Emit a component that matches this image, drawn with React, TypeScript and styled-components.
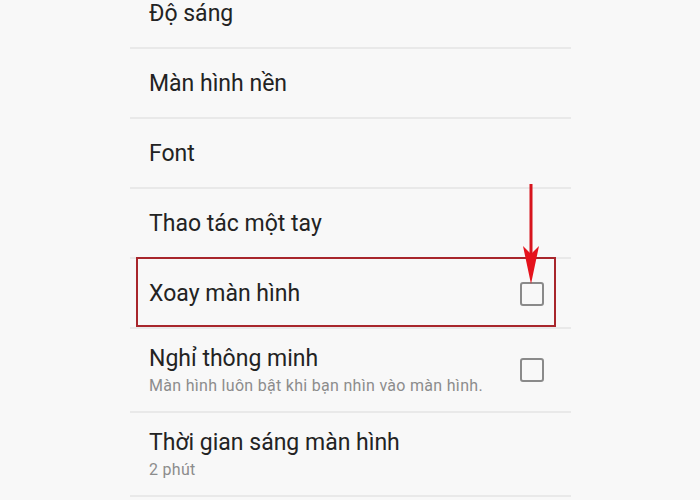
import React, { FC } from 'react';
import { createGlobalStyle, styled } from 'styled-components';

const GlobalStyle = createGlobalStyle`
  html, body {
    margin: 0;
    padding: 0;
    background: #f8f8f8;
    overflow: hidden;
  }
  body {
    font-family: Roboto, 'Noto Sans', 'Liberation Sans', sans-serif;
    -webkit-font-smoothing: antialiased;
  }
`;

const Screen = styled.div`
  width: 700px;
  height: 500px;
  overflow: hidden;
`;

const List = styled.div`
  margin: -21px 0 0 130px;
  width: 441px;
  display: flex;
  flex-direction: column;
`;

const Row = styled.div<{ $tall?: boolean }>`
  position: relative;
  display: flex;
  align-items: center;
  box-sizing: border-box;
  height: ${(p) => (p.$tall ? 84 : 70)}px;
  padding: ${(p) => (p.$tall ? '0' : '2px')} 27px 0 19px;
  border-bottom: 2px solid #e9e9e9;
`;

const Texts = styled.div`
  display: flex;
  flex-direction: column;
  flex: 1;
  min-width: 0;
`;

const Title = styled.span`
  font-size: 23px;
  line-height: 28px;
  color: #232323;
`;

const Subtitle = styled.span`
  margin-top: 3px;
  font-size: 16px;
  line-height: 20px;
  letter-spacing: 0.3px;
  color: #8c8c8c;
`;

const Checkbox = styled.span`
  flex: none;
  width: 24px;
  height: 24px;
  box-sizing: border-box;
  border: 2px solid #8a8a8a;
  border-radius: 3px;
`;

// annotation drawn over the rotation row
const Highlight = styled.div`
  position: absolute;
  left: 6px;
  right: 15px;
  top: -2px;
  bottom: 0;
  border: 2px solid #a8262c;
  pointer-events: none;
`;

const Arrow = styled.svg`
  position: absolute;
  left: 392px;
  top: -75px;
  overflow: visible;
  pointer-events: none;
`;

interface Item {
  title: string;
  subtitle?: string;
  checkbox?: boolean;
  marked?: boolean;
}

const items: Item[] = [
  { title: 'Độ sáng' },
  { title: 'Màn hình nền' },
  { title: 'Font' },
  { title: 'Thao tác một tay' },
  { title: 'Xoay màn hình', checkbox: true, marked: true },
  {
    title: 'Nghỉ thông minh',
    subtitle: 'Màn hình luôn bật khi bạn nhìn vào màn hình.',
    checkbox: true,
  },
  { title: 'Thời gian sáng màn hình', subtitle: '2 phút' },
];

const SettingRow: FC<{ item: Item }> = ({ item }) => (
  <Row $tall={!!item.subtitle}>
    <Texts>
      <Title>{item.title}</Title>
      {item.subtitle && <Subtitle>{item.subtitle}</Subtitle>}
    </Texts>
    {item.checkbox && <Checkbox />}
    {item.marked && (
      <>
        <Highlight />
        <Arrow width="18" height="100" viewBox="0 0 18 100">
          <line x1="9" y1="0" x2="9" y2="70" stroke="#d7141d" strokeWidth="3" />
          <path d="M1 62 L9 100 L17 62 L9 70 Z" fill="#e5121c" />
        </Arrow>
      </>
    )}
  </Row>
);

export default function App() {
  return (
    <Screen>
      <GlobalStyle />
      <List>
        {items.map((item) => (
          <SettingRow key={item.title} item={item} />
        ))}
      </List>
    </Screen>
  );
}
